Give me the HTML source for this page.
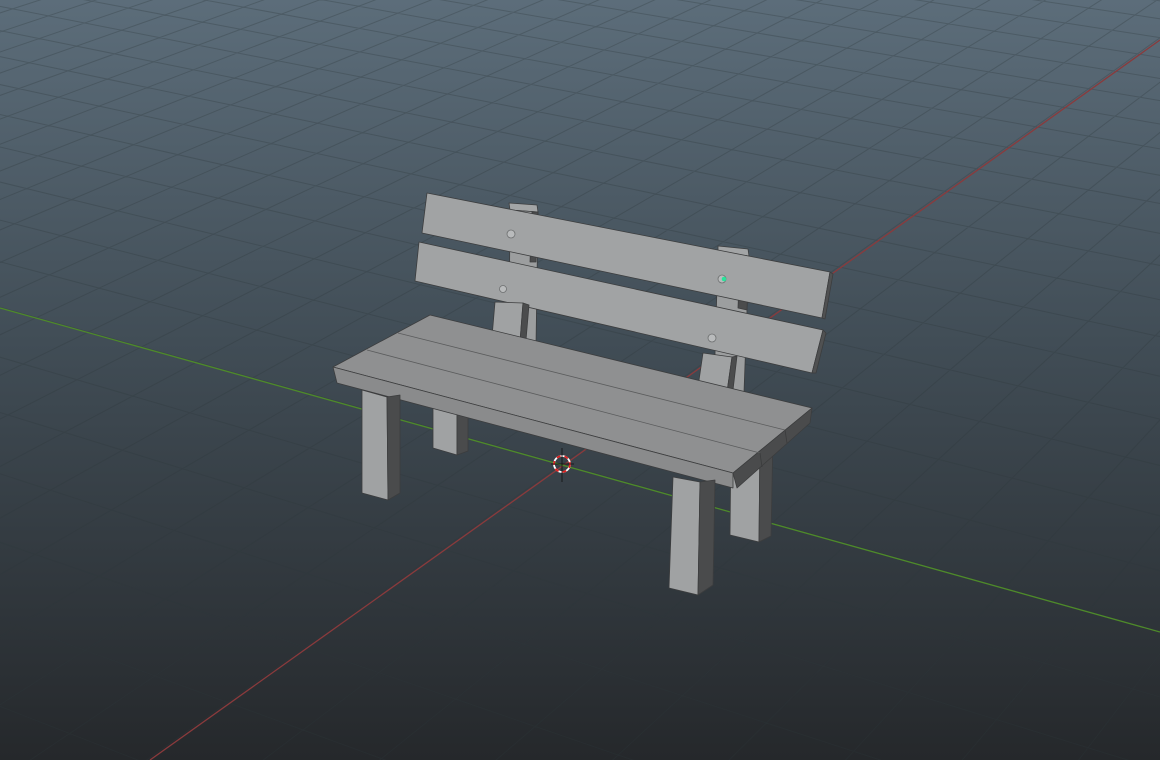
<!DOCTYPE html>
<html><head><meta charset="utf-8"><style>
html,body{margin:0;padding:0;width:1160px;height:760px;overflow:hidden;background:#3b454d}
svg{display:block;position:absolute;left:0;top:0}
</style></head><body>
<svg id="s" width="1160" height="760" viewBox="0 0 1160 760" xmlns="http://www.w3.org/2000/svg">
<defs>
<linearGradient id="bg" x1="0" y1="0" x2="0" y2="1">
<stop offset="0" stop-color="#5c6d7a"/>
<stop offset="0.45" stop-color="#414d56"/>
<stop offset="1" stop-color="#25282b"/>
</linearGradient>
</defs>
<rect width="1160" height="760" fill="url(#bg)"/>
<g id="grid" stroke="#2f373d" stroke-opacity="0.3" stroke-width="1" fill="none"></g>
<line x1="150" y1="760" x2="1160" y2="40" stroke="#8a3a3c" stroke-width="1.3"/>
<line x1="0" y1="308" x2="1160" y2="632" stroke="#4e8a2a" stroke-width="1.3"/>
<g stroke="#3c3d3e" stroke-width="0.8" stroke-linejoin="round">
<polygon points="509,203 537,205 538,212 510,210" fill="#a3a5a6"/>
<polygon points="510,210 538,212 536,345 509,342" fill="#9c9e9f"/>
<polygon points="532,212 538,212 536,262 530,262" fill="#4b4c4d"/>
<polygon points="718,246 748,249 749,256 718,253" fill="#a3a5a6"/>
<polygon points="718,253 749,256 744,392 714,388" fill="#9c9e9f"/>
<polygon points="740,256 749,256 747,310 738,308" fill="#4b4c4d"/>
<polygon points="433,400 457,405 457,455 433,448" fill="#a0a2a3"/>
<polygon points="457,405 468,402 468,451 457,455" fill="#4a4b4c"/>
<polygon points="731,440 760,440 759,542 730,535" fill="#a0a2a3"/>
<polygon points="760,440 773,435 771,536 759,542" fill="#4a4b4c"/>
<polygon points="427,193 830,272 822,318 422,233" fill="#a1a3a4"/>
<polygon points="830,272 833,274 825,319 822,318" fill="#505152"/>
<polygon points="419,242 823,330 812,373 415,281" fill="#a1a3a4"/>
<polygon points="823,330 826,333 816,373 812,373" fill="#505152"/>
<polygon points="495,302 523,303 520,342 492,337" fill="#a0a2a3"/>
<polygon points="523,303 529,305 526,340 520,342" fill="#4b4c4d"/>
<polygon points="703,353 732,357 727,392 698,387" fill="#a0a2a3"/>
<polygon points="732,357 737,356 733,390 727,392" fill="#4b4c4d"/>
<polygon points="430,315 812,408 733,473 333,367" fill="#8f9091"/>
<polygon points="333,367 733,473 733,488 337,383" fill="#8a8b8c"/>
<polygon points="733,473 812,408 810,423 737,488" fill="#4a4b4c"/>
<line x1="398" y1="333" x2="785" y2="430" stroke="#5b5c5d"/>
<line x1="367" y1="350" x2="760" y2="453" stroke="#5b5c5d"/>
<line x1="785" y1="430" x2="787" y2="443" stroke="#3a3b3c"/>
<line x1="760" y1="453" x2="762" y2="467" stroke="#3a3b3c"/>
<polygon points="362,390 387,397 388,500 362,493" fill="#a0a2a3"/>
<polygon points="387,397 400,395 400,493 388,500" fill="#4a4b4c"/>
<polygon points="673,477 700,482 698,595 669,588" fill="#a0a2a3"/>
<polygon points="700,482 715,480 713,585 698,595" fill="#4a4b4c"/>
</g>
<g fill="#b9bbbc" stroke="#6e7071" stroke-width="0.8">
<circle cx="511" cy="234" r="4"/>
<circle cx="722" cy="279" r="4"/>
<circle cx="503" cy="289" r="3.5"/>
<circle cx="712" cy="338" r="4"/>
</g>
<circle cx="724" cy="279" r="2.3" fill="#28e39a"/>
<circle cx="562" cy="464" r="8" fill="none" stroke="#fff" stroke-width="1.8"/>
<circle cx="562" cy="464" r="8" fill="none" stroke="#e02020" stroke-width="1.8" stroke-dasharray="4 4"/>
<line x1="562" y1="448" x2="562" y2="482" stroke="#111" stroke-width="0.8"/>
<line x1="551" y1="464" x2="574" y2="464" stroke="#111" stroke-width="0.8"/>
</svg>
<script>
(function(){
var g=document.getElementById('grid');
var O=[562,464],R=[2195,-700],G=[-3610,-700];
var a=0.034,b=0.016;
function P(u,v){var d=a*u+b*v+1;return[(a*u*R[0]+b*v*G[0]+O[0])/d,(a*u*R[1]+b*v*G[1]+O[1])/d];}
var eps=0.06,N=70,s='';
for(var k=-N;k<=N;k++){
 var v0=Math.max(-N,(eps-1-a*k)/b);
 if(v0<N){var p=P(k,v0),q=P(k,N);s+='M'+p[0].toFixed(1)+' '+p[1].toFixed(1)+'L'+q[0].toFixed(1)+' '+q[1].toFixed(1);}
 var u0=Math.max(-N,(eps-1-b*k)/a);
 if(u0<N){var p2=P(u0,k),q2=P(N,k);s+='M'+p2[0].toFixed(1)+' '+p2[1].toFixed(1)+'L'+q2[0].toFixed(1)+' '+q2[1].toFixed(1);}
}
var path=document.createElementNS('http://www.w3.org/2000/svg','path');
path.setAttribute('d',s);g.appendChild(path);
})();
</script>
</body></html>
